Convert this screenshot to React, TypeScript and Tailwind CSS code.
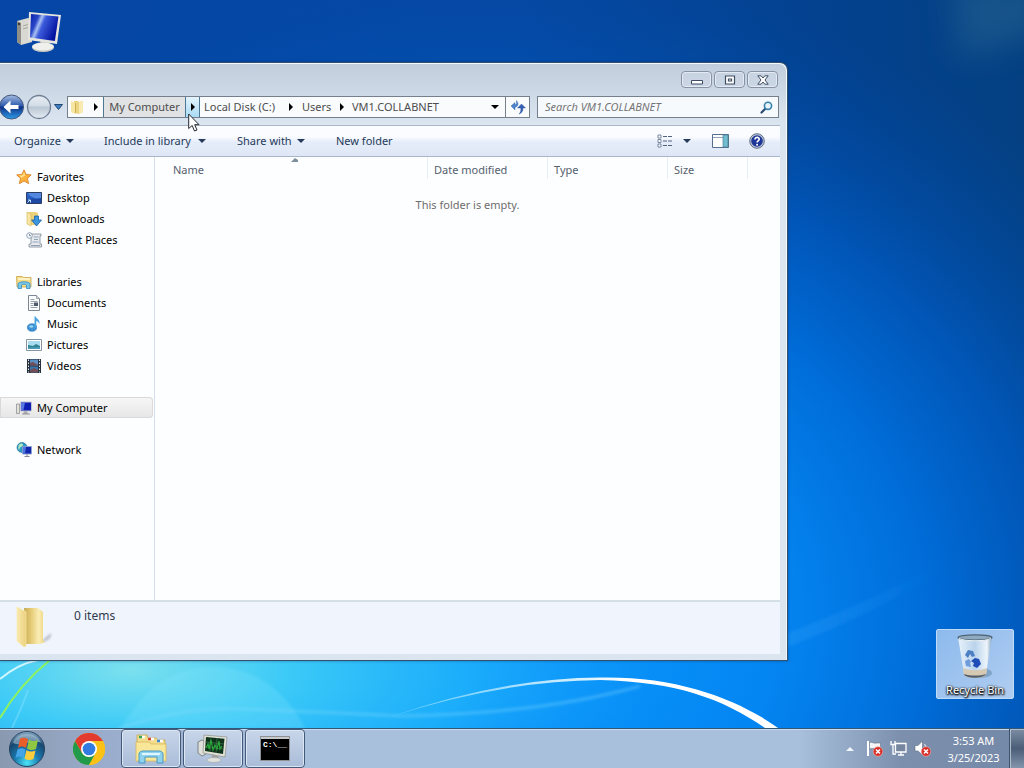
import type { ReactNode } from "react";

type IconProps = { className?: string };

function ComputerIcon({ className }: IconProps) {
  return (
    <svg viewBox="0 0 46 42" className={className} aria-hidden="true">
      <defs>
        <linearGradient id="pc-screen" x1="0" y1="0" x2="1" y2="0.4">
          <stop offset="0" stopColor="#0a1fa8" />
          <stop offset="0.28" stopColor="#2846c8" />
          <stop offset="0.4" stopColor="#a9c0f2" />
          <stop offset="0.52" stopColor="#3c5cdc" />
          <stop offset="1" stopColor="#0414a0" />
        </linearGradient>
      </defs>
      <path d="M1 10l11-3 4 2v22l-11 3-4-3z" fill="#d9d8d2" />
      <path d="M1 10l4 2v22l-4-3z" fill="#8f8f88" />
      <path d="M7 15l5-1.500M7 18l5-1.500" stroke="#a5a59d" strokeWidth="1" />
      <circle cx="3" cy="13" r="1.200" fill="#3a3a38" />
      <path d="M24 29l9 1 1 6h-9z" fill="#b9b9b3" />
      <ellipse cx="27" cy="36.500" rx="11" ry="4.500" fill="#c9c9c4" />
      <ellipse cx="27" cy="35.500" rx="11" ry="4" fill="#efefec" />
      <path d="M13 1l32 3-4 29-29-4z" fill="#e6e5df" />
      <path d="M15 3l27.500 2.600-3.600 24.400L14 26.500z" fill="url(#pc-screen)" />
    </svg>
  );
}

function RecycleIcon({ className }: IconProps) {
  return (
    <svg viewBox="0 0 38 48" className={className} aria-hidden="true">
      <defs>
        <linearGradient id="bin" x1="0" x2="1">
          <stop offset="0" stopColor="#e8f2fb" />
          <stop offset="0.5" stopColor="#b9d3ec" />
          <stop offset="0.85" stopColor="#eef5fb" />
          <stop offset="1" stopColor="#86a3bf" />
        </linearGradient>
      </defs>
      <ellipse cx="24" cy="40" rx="12" ry="5" fill="#5e7f9f" opacity="0.500" />
      <path d="M2 4l6 37c1 4 20 4 22 0l6-37z" fill="url(#bin)" />
      <path d="M7 35l1 7c1 4 20 4 22 0l1-7c-7 3-17 3-24 0z" fill="#d6c9b4" />
      <path d="M8 41c1 5 20 5 22 0-6 2-16 2-22 0z" fill="#53606c" />
      <ellipse cx="19" cy="4.500" rx="17" ry="2.700" fill="#8fa9be" stroke="#4f6577" strokeWidth="1.200" />
      <path d="M3 5.500c5 3 27 3 32 0" stroke="#f1f7fb" strokeWidth="1" fill="none" />
      <path d="M9 22l3-5 5 1 2 5-3 1-2-3-2 4z" fill="#4c7fc4" />
      <path d="M19 25l4 1 2 5-4 4-4-2 1-3-3-2z" fill="#1f4db8" />
      <path d="M9 28l4-2 2 3-1 1 1 4-5-1z" fill="#6f9bdb" />
    </svg>
  );
}

function FolderIcon({ className }: IconProps) {
  return (
    <svg viewBox="0 0 38 42" className={className} aria-hidden="true">
      <defs>
        <linearGradient id="fold-a" x1="0" x2="1">
          <stop offset="0" stopColor="#f9eab0" />
          <stop offset="1" stopColor="#ecd07c" />
        </linearGradient>
        <linearGradient id="fold-b" x1="0" x2="1">
          <stop offset="0" stopColor="#c9ab57" />
          <stop offset="0.35" stopColor="#e6cc78" />
          <stop offset="0.7" stopColor="#faedb4" />
          <stop offset="1" stopColor="#ecd27e" />
        </linearGradient>
        <filter id="fold-blur">
          <feGaussianBlur stdDeviation="1.200" />
        </filter>
      </defs>
      <path d="M24 36l11-9c1 4-2 8-9 9z" fill="#a9aeb9" opacity="0.700" filter="url(#fold-blur)" />
      <path d="M8 2l14 0 5 4v28l2 2-5 2-14 0z" fill="url(#fold-b)" />
      <path d="M1 1l9 5v34l-2 1-7-6z" fill="url(#fold-a)" stroke="#f7e9a9" strokeWidth="0.700" />
    </svg>
  );
}

function AddressFolderIcon() {
  return (
    <svg viewBox="0 0 15 16" className="h-4 w-[15px]" aria-hidden="true">
      <path d="M4 2h4l1 1 4-1v11l-4 2-5-1z" fill="#ecd583" />
      <path d="M9 3l4-1v11l-4 2z" fill="#f9ebb0" />
      <path d="M1 2l4 2v11l-4-2z" fill="#f7e6a1" />
      <path d="M5.500 4v10" stroke="#cfae52" />
    </svg>
  );
}

function StarIcon() {
  return (
    <svg viewBox="0 0 16 16" className="size-4" aria-hidden="true">
      <path d="M8 .8l2.100 4.600 5.100.5-3.800 3.500 1.200 5.200L8 12l-4.700 2.700 1.200-5.200L.7 5.900l5.200-.5z" fill="#fbb13b" stroke="#d9822b" strokeWidth="0.900" />
      <path d="M8 3l1.300 3.200L5.500 9 3 6.600l3.500-.4z" fill="#fde08a" />
    </svg>
  );
}

function DesktopIcon() {
  return (
    <svg viewBox="0 0 16 16" className="size-4" aria-hidden="true">
      <path d="M.5 2.500h15v11H.5z" fill="#2a5fc4" stroke="#2a3f63" />
      <path d="M2 3h13v5C9 9 4 7 2 3z" fill="#5488e0" />
      <path d="M1 9c5-1 9 1 14-1v5H1z" fill="#1d48a4" />
      <path d="M1.500 12.500L4 10M2 10h2.500v2.500" stroke="#c4e4ff" fill="none" />
    </svg>
  );
}

function DownloadsIcon() {
  return (
    <svg viewBox="0 0 16 16" className="size-4" aria-hidden="true">
      <path d="M3 1h7l2 1v12H4z" fill="#edd27a" />
      <path d="M1 1l4 2v12l-4-2z" fill="#f7e6a1" stroke="#d3b152" strokeWidth="0.600" />
      <path d="M8.500 5h4v4h3L10.500 15 5.500 9h3z" fill="#3a97df" stroke="#1661a8" strokeWidth="0.800" />
    </svg>
  );
}

function RecentIcon() {
  return (
    <svg viewBox="0 0 16 16" className="size-4" aria-hidden="true">
      <path d="M5 2h10v2h-1v8h1.500v3H3v-3h2z" fill="#e6eaee" stroke="#8b959f" strokeWidth="0.900" />
      <path d="M7.500 5h5M8 7.500h4M6.500 10h6M5 13.500h9" stroke="#8fa3b5" />
      <circle cx="3.500" cy="3.500" r="2.800" fill="#f6fafc" stroke="#8499ab" strokeWidth="0.900" />
      <path d="M3.500 2v1.700H5" stroke="#53687c" fill="none" strokeWidth="0.700" />
    </svg>
  );
}

function LibrariesIcon() {
  return (
    <svg viewBox="0 0 16 16" className="size-4" aria-hidden="true">
      <path d="M.5 2.500h6l1 1h7.500V13H1z" fill="#f4dc86" stroke="#c9a546" strokeWidth="0.800" />
      <path d="M2 5h12" stroke="#fff8d8" strokeWidth="1.500" />
      <path d="M2 14.500V10c0-3 12-3 12 0v4.500h-3.500V11c0-1-5-1-5 0v3.500z" fill="#76c7ea" stroke="#348cbf" strokeWidth="0.800" />
    </svg>
  );
}

function DocumentIcon() {
  return (
    <svg viewBox="0 0 16 16" className="size-4" aria-hidden="true">
      <path d="M2.500.5h8l3 3v12h-11z" fill="#fbfcfd" stroke="#7d8791" />
      <path d="M10.500.5v3h3" fill="#d5dbe2" stroke="#7d8791" strokeWidth="0.700" />
      <path d="M4.500 4.500h4M4.500 6.500h7M4.500 8.500h3M4.500 10.500h3M4.500 12.500h7" stroke="#8d98a5" strokeWidth="0.900" />
      <path d="M8 7.500h4v3.500H8z" fill="#4e5b6d" />
    </svg>
  );
}

function MusicIcon() {
  return (
    <svg viewBox="0 0 16 16" className="size-4" aria-hidden="true">
      <ellipse cx="6" cy="11.500" rx="4.500" ry="3.700" fill="#3b94d8" stroke="#2471b4" strokeWidth="0.700" />
      <ellipse cx="5.300" cy="10.500" rx="2" ry="1.300" fill="#9bd3f6" />
      <path d="M8.500 11V.5h1.300c.4 2.700 4.700 3 3.500 7.500-.6-2-2-2.700-3-3V12z" fill="#4aa4e0" />
    </svg>
  );
}

function PictureIcon() {
  return (
    <svg viewBox="0 0 16 16" className="size-4" aria-hidden="true">
      <path d="M.5 2.500h15v11H.5z" fill="#fff" stroke="#8795a3" />
      <path d="M2 4h12v8H2z" fill="#a9dcee" />
      <path d="M2 8l5 1 3-2 4 2v3H2z" fill="#2f8391" />
      <path d="M2 10.500l12-.5v2H2z" fill="#4c9cb8" />
    </svg>
  );
}

function VideoIcon() {
  return (
    <svg viewBox="0 0 16 16" className="size-4" aria-hidden="true">
      <path d="M1 1h14v14H1z" fill="#26313d" />
      <path d="M4 1.500h8v6H4z" fill="#5a8fc4" />
      <path d="M4 8.500h8v6H4z" fill="#3b76ae" />
      <path d="M4 5l3-1 5 3v.5H4zM4 12l4-2 4 2v2.500H4z" fill="#714d55" />
      <path d="M2.500 1.500v13M13.500 1.500v13" stroke="#e5edf4" strokeDasharray="1.500 1.500" />
    </svg>
  );
}

function SmallComputerIcon() {
  return (
    <svg viewBox="0 0 16 16" className="size-4" aria-hidden="true">
      <path d="M.5 4h3v9.500h-3z" fill="#e1e1de" stroke="#85858a" strokeWidth="0.700" />
      <path d="M8 11h3l1 3H7z" fill="#a9a9ad" />
      <path d="M6 14h8" stroke="#96969c" />
      <path d="M4.500 2h11v9h-11z" fill="#0c1fb0" stroke="#c2c4d3" />
      <path d="M5 2.500h4L7.500 10H5z" fill="#5a78e4" />
    </svg>
  );
}

function NetworkIcon() {
  return (
    <svg viewBox="0 0 16 16" className="size-4" aria-hidden="true">
      <circle cx="6" cy="5.500" r="5" fill="#2b9bc4" stroke="#1a6690" strokeWidth="0.600" />
      <path d="M3 2.500c2-1.500 4-1 4 .5S4 4.500 3.500 7 1.500 6 3 2.500z" fill="#aee6c0" />
      <path d="M6.500 4.500h9V12h-9z" fill="#1128ad" stroke="#8ea0d4" strokeWidth="0.900" />
      <path d="M7 5h3l-1 6.500H7z" fill="#4d73e0" />
      <path d="M11 12v2M8.500 14.500h5" stroke="#83899b" />
    </svg>
  );
}

function Caret({ className = "" }: IconProps) {
  return (
    <svg viewBox="0 0 8 4" className={`h-1 w-2 shrink-0 ${className}`} aria-hidden="true">
      <path d="M0 0h8L4 4z" fill="currentColor" />
    </svg>
  );
}

function CrumbArrow() {
  return (
    <svg viewBox="0 0 4 8" className="h-2 w-1" aria-hidden="true">
      <path d="M0 0l4 4-4 4z" fill="#000" />
    </svg>
  );
}

function ErrorBadge() {
  return (
    <g>
      <circle cx="12" cy="11.500" r="4.800" fill="#d8302a" stroke="#f2b7ae" strokeWidth="0.600" />
      <path d="M10 9.500l4 4M14 9.500l-4 4" stroke="#fff" strokeWidth="1.500" />
    </g>
  );
}

function Wallpaper() {
  return (
    <svg viewBox="0 0 1024 768" preserveAspectRatio="none" className="absolute inset-0 h-full w-full" aria-hidden="true">
      <defs>
        <linearGradient id="sky" x1="0" x2="1" y1="0" y2="0">
          <stop offset="0" stopColor="#0546a6" />
          <stop offset="0.5" stopColor="#0648a4" />
          <stop offset="0.82" stopColor="#03418e" />
          <stop offset="1" stopColor="#044082" />
        </linearGradient>
        <radialGradient id="glow" gradientUnits="userSpaceOnUse" cx="0" cy="0" r="1" gradientTransform="translate(480 620) scale(790 660)">
          <stop offset="0" stopColor="#0c9cff" />
          <stop offset="0.37" stopColor="#0486f2" />
          <stop offset="0.56" stopColor="#0070de" stopOpacity="0.950" />
          <stop offset="0.72" stopColor="#005cc4" stopOpacity="0.800" />
          <stop offset="1" stopColor="#0048a0" stopOpacity="0" />
        </radialGradient>
        <radialGradient id="light" gradientUnits="userSpaceOnUse" cx="0" cy="0" r="1" gradientTransform="translate(130 670) scale(560 210)">
          <stop offset="0" stopColor="#7be0ee" />
          <stop offset="0.28" stopColor="#3ccaf7" />
          <stop offset="0.6" stopColor="#1eb0fb" stopOpacity="0.900" />
          <stop offset="1" stopColor="#0c8ef8" stopOpacity="0" />
        </radialGradient>
        <linearGradient id="arc" x1="0" x2="1">
          <stop offset="0" stopColor="#9fe2ff" stopOpacity="0.500" />
          <stop offset="0.6" stopColor="#fff" />
          <stop offset="1" stopColor="#fff" />
        </linearGradient>
        <linearGradient id="ray" x1="0" x2="1">
          <stop offset="0" stopColor="#2d9cf5" stopOpacity="0.400" />
          <stop offset="0.7" stopColor="#2d9cf5" stopOpacity="0" />
        </linearGradient>
        <filter id="soft" x="-40%" y="-60%" width="180%" height="220%">
          <feGaussianBlur stdDeviation="16" />
        </filter>
        <filter id="edge">
          <feGaussianBlur stdDeviation="1.500" />
        </filter>
      </defs>
      <path d="M0 0h1024v768H0z" fill="url(#sky)" />
      <path d="M0 0h1024v768H0z" fill="url(#glow)" />
      <path d="M0 450h800v318H0z" fill="url(#light)" />
      <path d="M950-20h100v50L960 60z" fill="#3a7898" opacity="0.350" filter="url(#soft)" />
      <path d="M770 640Q880 600 1000 530v6Q880 615 770 653z" fill="url(#ray)" filter="url(#edge)" />
      <path d="M120 728C145 690 170 667 212 667S285 690 305 728z" fill="#8deaff" opacity="0.220" filter="url(#edge)" />
      <path d="M118 729Q180 707 240 709T400 716Q540 714 640 686" stroke="#86dcff" strokeWidth="3" fill="none" opacity="0.350" filter="url(#edge)" />
      <path d="M390 717Q500 678 600 677.500C680 676 740 700 781 730L768 730C725 700 680 682 600 680Q500 681 390 717z" fill="url(#arc)" />
      <path d="M0 679Q18 664 38 660" stroke="#e8fbff" strokeWidth="2" fill="none" opacity="0.850" />
      <path d="M0 718Q20 684 50 660" stroke="#8df25e" strokeWidth="2" fill="none" />
      <path d="M12 728Q23 705 28 690" stroke="#9beaff" strokeWidth="2" fill="none" opacity="0.350" />
    </svg>
  );
}

type NavItem = { label: string; icon: ReactNode };

const groups: { head: NavItem; items: NavItem[]; selected?: boolean }[] = [
  {
    head: { label: "Favorites", icon: <StarIcon /> },
    items: [
      { label: "Desktop", icon: <DesktopIcon /> },
      { label: "Downloads", icon: <DownloadsIcon /> },
      { label: "Recent Places", icon: <RecentIcon /> },
    ],
  },
  {
    head: { label: "Libraries", icon: <LibrariesIcon /> },
    items: [
      { label: "Documents", icon: <DocumentIcon /> },
      { label: "Music", icon: <MusicIcon /> },
      { label: "Pictures", icon: <PictureIcon /> },
      { label: "Videos", icon: <VideoIcon /> },
    ],
  },
  { head: { label: "My Computer", icon: <SmallComputerIcon /> }, items: [], selected: true },
  { head: { label: "Network", icon: <NetworkIcon /> }, items: [] },
];

function CaptionButtons() {
  const button =
    "flex h-[17px] w-[31px] items-center justify-center rounded-sm border border-[#8793a5] bg-[#cbd6e4]/60 text-[#3f4d63] shadow-[inset_0_0_0_1px_#e3eaf3]";
  return (
    <div className="flex h-[33px] shrink-0 justify-end gap-[2px] pt-2 pr-[2px]">
      <button className={button} aria-label="Minimize">
        <svg viewBox="0 0 12 10" className="h-[10px] w-3">
          <path d="M.5 5.500h11v3.500H.5z" fill="#fff" stroke="currentColor" />
        </svg>
      </button>
      <button className={button} aria-label="Maximize">
        <svg viewBox="0 0 12 10" className="h-[10px] w-3">
          <path d="M1.500 1h9v8h-9zM4.500 4h3v2h-3z" fill="#fff" stroke="currentColor" strokeWidth="1.200" />
        </svg>
      </button>
      <button className={button} aria-label="Close">
        <svg viewBox="0 0 12 10" className="h-[10px] w-3">
          <path d="M.8.800h3.300L6 3 7.900.8h3.300L8 5l3.200 4.200H7.900L6 7 4.100 9.200H.8L4 5z" fill="#fff" stroke="currentColor" />
        </svg>
      </button>
    </div>
  );
}

function AddressRow() {
  return (
    <div className="flex h-[22px] shrink-0 items-center pr-px">
      <div className="flex w-[67px] shrink-0 items-center">
        <button aria-label="Back" className="w-6">
          <svg viewBox="0 0 24 26" className="h-[26px] w-6">
            <defs>
              <linearGradient id="back" x1="0" x2="0" y1="0" y2="1">
                <stop offset="0" stopColor="#a5bce0" />
                <stop offset="0.450" stopColor="#2f5cae" />
                <stop offset="0.500" stopColor="#0e2f86" />
                <stop offset="1" stopColor="#2f9fea" />
              </linearGradient>
            </defs>
            <circle cx="11.500" cy="13" r="12" fill="url(#back)" stroke="#45587c" />
            <path d="M3.500 13l7-6.500v4.500h8v4h-8v4.500z" fill="#fff" />
          </svg>
        </button>
        <button aria-label="Forward" className="ml-[2px] w-[26px]">
          <svg viewBox="0 0 26 26" className="size-[26px]">
            <defs>
              <linearGradient id="forward" x1="0" x2="0" y1="0" y2="1">
                <stop offset="0" stopColor="#e7edf4" />
                <stop offset="0.450" stopColor="#d3dce6" />
                <stop offset="0.500" stopColor="#b9c5d2" />
                <stop offset="1" stopColor="#e4ecf4" />
              </linearGradient>
            </defs>
            <circle cx="13" cy="13" r="11.500" fill="url(#forward)" stroke="#718095" strokeWidth="1.300" />
          </svg>
        </button>
        <button aria-label="Recent pages" className="ml-[2px] w-[9px]">
          <svg viewBox="0 0 9 6" className="h-[6px] w-[9px]">
            <path d="M.5.5h8L4.500 5.500z" fill="#3d7fc6" stroke="#24466f" />
          </svg>
        </button>
      </div>
      <nav aria-label="Address" className="flex h-[22px] min-w-0 flex-1 items-stretch border border-[#76808d] bg-[#f9fbfd] text-[#4d4d4d]">
        <div className="flex w-[35px] shrink-0 items-center justify-between pr-[5px] pl-[2px]">
          <AddressFolderIcon />
          <CrumbArrow />
        </div>
        <button className="w-[83px] shrink-0 border-x border-[#4c7893] bg-[#e1e2e4] whitespace-nowrap">My Computer</button>
        <button aria-label="My Computer folders" className="flex w-[14px] shrink-0 items-center justify-center border-r border-[#4c7893] bg-linear-to-b from-[#e4f4fc] to-[#a8dbf4]">
          <CrumbArrow />
        </button>
        <button className="flex w-[98px] shrink-0 items-center justify-between pr-[5px] pl-1 whitespace-nowrap">
          Local Disk (C:)
          <CrumbArrow />
        </button>
        <button className="flex w-[50px] shrink-0 items-center justify-between pr-1 pl-1">
          Users
          <CrumbArrow />
        </button>
        <button className="pl-1">VM1.COLLABNET</button>
        <button aria-label="Previous locations" className="ml-auto flex w-5 items-center justify-center text-black">
          <Caret />
        </button>
        <button aria-label="Refresh" className="flex w-6 shrink-0 items-center justify-center border-l border-[#76808d]">
          <svg viewBox="0 0 16 16" className="size-4">
            <path d="M1 7l4-3.500V6c1.500-.3 1.800-2 1.500-4.500C8.500 4 9 7 5 8.500V11z" fill="#4c82cf" stroke="#315f9f" strokeWidth="0.400" />
            <path d="M7.500 9L11.500 5l4 4h-2.500c.2 3-1.500 5.500-4 6 1.700-1.500 2-3.500 1.800-6z" fill="#3560b4" stroke="#2c4f94" strokeWidth="0.400" />
          </svg>
        </button>
      </nav>
      <form className="ml-[7px] flex h-[22px] w-[242px] shrink-0 items-center border border-[#76808d] bg-[#f7fafd] pr-[5px] pl-[7px]">
        <input
          type="search"
          aria-label="Search VM1.COLLABNET"
          placeholder="Search VM1.COLLABNET"
          className="min-w-0 flex-1 italic outline-none placeholder:text-[#757575]"
        />
        <button type="button" aria-label="Search">
          <svg viewBox="0 0 13 13" className="size-[13px]">
            <path d="M1.500 11.500L5.500 7.500" stroke="#294a70" strokeWidth="2.200" strokeLinecap="round" />
            <circle cx="8" cy="4.800" r="3.600" fill="#e7f5fb" stroke="#3480ad" strokeWidth="1.600" />
          </svg>
        </button>
      </form>
    </div>
  );
}

function Toolbar() {
  return (
    <div className="mt-[7px] flex h-8 shrink-0 items-center border-y border-t-[#aab7c6] border-b-[#a9b5c8] bg-linear-to-b from-[#fafcff] from-35% via-[#e5ecf9] via-55% to-[#dfe7f6] pr-[15px] pl-[14px] text-[#263a5a]">
      <button className="flex w-[60px] items-center justify-between">
        Organize
        <Caret />
      </button>
      <button className="ml-[30px] flex w-[102px] items-center justify-between whitespace-nowrap">
        Include in library
        <Caret />
      </button>
      <button className="ml-[31px] flex w-[68px] items-center justify-between whitespace-nowrap">
        Share with
        <Caret />
      </button>
      <button className="ml-[31px] whitespace-nowrap">New folder</button>
      <div className="ml-auto flex items-center">
        <button aria-label="Change your view" className="flex items-center gap-[10px]">
          <svg viewBox="0 0 16 14" className="h-[14px] w-4">
            <path d="M1 1h3v3H1zM1 5.500h3v3H1zM1 10h3v3H1z" fill="#fff" stroke="#6c7c96" strokeWidth="0.900" />
            <path d="M6 2.500h9M6 7h9M6 11.500h9" stroke="#52637e" strokeDasharray="4 1" />
          </svg>
          <Caret />
        </button>
        <button aria-label="Show the preview pane" className="ml-[21px]">
          <svg viewBox="0 0 17 14" className="h-[14px] w-[17px]">
            <path d="M.5.5h16v13H.5z" fill="#fff" stroke="#54708c" />
            <path d="M1 3.500h10" stroke="#8fa6bc" />
            <path d="M11 1h5v12h-5z" fill="#70bdd0" stroke="#4e7f9b" strokeWidth="0.700" />
          </svg>
        </button>
        <button aria-label="Get help" className="ml-5">
          <svg viewBox="0 0 16 16" className="size-4">
            <circle cx="8" cy="8" r="7.300" fill="#bac5d5" stroke="#58657c" strokeWidth="0.900" />
            <circle cx="8" cy="8" r="5.800" fill="#1e3698" />
            <path d="M6 6.500C6 3.500 10.300 3.800 10.200 6.300 10 8 8.100 7.800 8.100 9.500" stroke="#fff" strokeWidth="1.600" fill="none" />
            <circle cx="8.100" cy="11.700" r="1" fill="#fff" />
          </svg>
        </button>
      </div>
    </div>
  );
}

function NavigationPane() {
  return (
    <nav aria-label="Folders" className="flex w-[155px] shrink-0 flex-col gap-[21px] border-r border-[#d5dfec] pt-[9px] text-black">
      {groups.map(({ head, items, selected }) => (
        <ul key={head.label}>
          <li>
            <a
              href="#"
              className={`mr-px flex h-[21px] items-center gap-[5px] pl-4 ${selected ? "rounded-r-sm bg-linear-to-b from-[#f7f7f7] to-[#e6e6e7] shadow-[inset_0_0_0_1px_#d9d9d9]" : ""}`}
            >
              {head.icon}
              {head.label}
            </a>
          </li>
          {items.map((item) => (
            <li key={item.label}>
              <a href="#" className="flex h-[21px] items-center gap-[5px] pl-[26px]">
                {item.icon}
                {item.label}
              </a>
            </li>
          ))}
        </ul>
      ))}
    </nav>
  );
}

function FileList() {
  const head = "h-[22px] border-r border-[#e6edf4] pl-[6px] pt-1 text-left font-normal text-[#56606d]";
  return (
    <div className="min-w-0 flex-1">
      <table className="w-full table-fixed border-separate border-spacing-0">
        <colgroup>
          <col />
          <col className="w-[120px]" />
          <col className="w-[120px]" />
          <col className="w-[80px]" />
          <col className="w-8" />
        </colgroup>
        <thead>
          <tr>
            <th className="relative h-[22px] border-r border-[#e6edf4] pt-1 pl-[18px] text-left font-normal text-[#56606d]">
              Name
              <svg viewBox="0 0 7 4" className="absolute top-[1px] left-1/2 h-1 w-[7px]" aria-hidden="true">
                <path d="M0 4L4 0l3 2v2z" fill="#7d8f9c" />
              </svg>
            </th>
            <th className={head}>Date modified</th>
            <th className={head}>Type</th>
            <th className={head}>Size</th>
            <td />
          </tr>
        </thead>
        <tbody>
          <tr>
            <td colSpan={5} className="pt-[18px] text-center text-[#6d6d6d]">
              This folder is empty.
            </td>
          </tr>
        </tbody>
      </table>
    </div>
  );
}

function ExplorerWindow() {
  return (
    <main className="absolute top-[62px] right-[236px] bottom-[107px] left-0 flex flex-col rounded-tr-lg border-t border-r border-b border-[#34506f] bg-linear-to-b from-[#c0cddc] to-[#dbe5f0] to-[60px] pr-[7px] pb-[6px] shadow-[inset_-1px_1px_0_#f3f8fc,0_0_3px_rgba(0,25,70,0.4)]">
      <CaptionButtons />
      <AddressRow />
      <Toolbar />
      <div className="flex min-h-0 flex-1 bg-[#fdfeff]">
        <NavigationPane />
        <FileList />
      </div>
      <footer className="flex h-[54px] shrink-0 items-start border-t-2 border-[#d5dfe8] bg-[#f0f4fd] pt-1 pl-4 text-[#303a4c]">
        <FolderIcon className="h-[42px] w-[38px]" />
        <p className="ml-5 text-[12px] leading-5">0 items</p>
      </footer>
    </main>
  );
}

function Taskbar() {
  const task =
    "flex h-[39px] w-[60px] items-center justify-center rounded-sm border border-[#45597a] bg-linear-to-b from-[#c8d6e9] to-[#a9bcd8] shadow-[inset_0_0_0_1px_#dce7f5]";
  return (
    <footer className="absolute inset-x-0 bottom-0 flex h-10 items-center border-t border-[#335777] bg-linear-[to_right,#8999b0,#9aaccb_10%,#a8c0dc_30%,#a8c0dc_78%,#7c90ae_88%,#7488a7] shadow-[inset_0_1px_0_#c9dbed]">
      <button aria-label="Start" className="ml-2">
        <svg viewBox="0 0 38 38" className="size-[38px]">
          <defs>
            <radialGradient id="orb" cx="0.500" cy="0.900" r="0.900">
              <stop offset="0" stopColor="#4be4f7" />
              <stop offset="0.400" stopColor="#1a78ae" />
              <stop offset="0.750" stopColor="#17486f" />
              <stop offset="1" stopColor="#8fb2cc" />
            </radialGradient>
          </defs>
          <circle cx="19" cy="19" r="17.500" fill="url(#orb)" stroke="#27435f" />
          <path d="M5 13C9 1 29 1 33 13 25 9 14 17 5 13z" fill="#d7e6f1" opacity="0.450" />
          <path d="M12 9c3-2 5-1 8 0l-2 9c-3-2-5-2-8 0z" fill="#e95d2a" />
          <path d="M21 9.500c3 2 6 2 9 .5l-2 9c-3 1.500-6 1.500-9-.5z" fill="#8fc642" />
          <path d="M9.500 19.500c3-2 5-1.500 8 0l-2 8.500c-3-2-5-2-8 0z" fill="#43a4e8" />
          <path d="M18.500 20c3 2 6 2 9 .5l-2 8.500c-3 1.500-6 1.500-9-.5z" fill="#fbcc3c" />
        </svg>
      </button>
      <button aria-label="Google Chrome" className="ml-[27px]">
        <svg viewBox="0 0 32 32" className="size-8">
          <circle cx="16" cy="16" r="16" fill="#fbc116" />
          <path d="M2.140 8A16 16 0 0 0 16 32l6.930-12-6.930 4-6.930-4z" fill="#229a4b" />
          <path d="M16 8h13.860A16 16 0 0 1 16 32l6.930-12z" fill="#fbc116" />
          <path d="M16 8h13.860A16 16 0 0 0 2.140 8l6.930 12z" fill="#e33b2e" />
          <circle cx="16" cy="16" r="8" fill="#fff" />
          <circle cx="16" cy="16" r="6.300" fill="#327be0" />
        </svg>
      </button>
      <button className={`ml-4 ${task}`} aria-label="Windows Explorer">
        <svg viewBox="0 0 34 30" className="h-[30px] w-[34px]">
          <path d="M3 1h10l1 3h8l2 2h7v20H3z" fill="#f3dd8c" stroke="#c5a552" strokeWidth="0.800" />
          <path d="M5 3h6M14 5h6M23 7h6" stroke="#fff" strokeWidth="2.500" />
          <path d="M5 3h3" stroke="#32a356" strokeWidth="2.500" />
          <path d="M14 5h3" stroke="#d5422f" strokeWidth="2.500" />
          <path d="M23 7h3" stroke="#3c89d2" strokeWidth="2.500" />
          <path d="M2 8h13l2 2h15v17H2z" fill="#f9e799" stroke="#d8b75b" strokeWidth="0.800" />
          <path d="M5 29V20c0-2 2-3 4-3h16c2 0 4 1 4 3v9h-6v-6H11v6z" fill="#8fd2ee" stroke="#4797c5" />
          <path d="M8 20h18" stroke="#dff6ff" strokeWidth="2" />
        </svg>
      </button>
      <button className={`ml-[2px] ${task}`} aria-label="Resource Monitor">
        <svg viewBox="0 0 34 30" className="h-[30px] w-[34px]">
          <path d="M2 8l4-2 4 2v12l-4 2-4-3z" fill="#dedfda" stroke="#68706f" strokeWidth="0.800" />
          <path d="M16 21l6 1 1 3h-7z" fill="#a0a39f" />
          <ellipse cx="18" cy="26" rx="7" ry="2.500" fill="#dfe1dd" stroke="#989d9b" strokeWidth="0.500" />
          <path d="M8 1l23 2-2 20-22-4z" fill="#e2e2d8" stroke="#898e86" strokeWidth="0.700" />
          <path d="M10 3l18.500 1.800L27 20 9 17z" fill="#10321a" />
          <path d="M9.500 8l18.500 2M9.300 13l18 2M15 3.500l-1 14M21 4l-1 15" stroke="#3f7850" strokeWidth="0.700" />
          <path d="M10 14l2-4 1 5 2-9 2 10 2-5 2 4 2-8 1 8 2-3" stroke="#2aa83c" strokeWidth="1.200" fill="none" />
        </svg>
      </button>
      <button className={`ml-[2px] ${task}`} aria-label="Command Prompt">
        <span className="flex h-[25px] w-[30px] flex-col border border-[#8f9092] bg-black text-left">
          <span className="h-[2px] w-full bg-[#c7cacc]" />
          <span className="pl-[2px] font-['Liberation_Mono',monospace] text-[8px] leading-[12px] font-bold text-white">C:\__</span>
        </span>
      </button>
      <div className="ml-auto flex h-full items-center">
        <button aria-label="Show hidden icons" className="mr-3 text-[#f3f7fb]">
          <Caret className="rotate-180" />
        </button>
        <button aria-label="Action Center" className="mr-[7px]">
          <svg viewBox="0 0 17 17" className="size-[17px]">
            <path d="M2 1v15" stroke="#fff" strokeWidth="2" />
            <path d="M3.500 2.500c3-1 4 1.500 7 .500h4v6c-4 1-6-1.500-11 0z" fill="#f3f5f7" stroke="#56647b" strokeWidth="0.500" />
            <ErrorBadge />
          </svg>
        </button>
        <button aria-label="Network" className="mr-[7px]">
          <svg viewBox="0 0 17 17" className="size-[17px]">
            <path d="M5.500 3.500H16v8.500H5.500z" fill="#76869e" stroke="#fff" strokeWidth="1.300" />
            <path d="M8 15h6M11 12v3M1 1v3.500h4V1M3 4.500V14h3" stroke="#fff" strokeWidth="1.300" fill="none" />
          </svg>
        </button>
        <button aria-label="Speakers" className="mr-4">
          <svg viewBox="0 0 17 17" className="size-[17px]">
            <path d="M1 5.500h3L8.500 1v14L4 11H1z" fill="#fff" stroke="#5e6c83" strokeWidth="0.600" />
            <path d="M10.500 4c1 1 1 3 1 5" stroke="#edf3f9" fill="none" />
            <ErrorBadge />
          </svg>
        </button>
        <button className="w-[53px] text-center leading-[17px] whitespace-nowrap text-white">
          <time dateTime="2023-03-25T03:53">
            3:53 AM
            <br />
            3/25/2023
          </time>
        </button>
        <button aria-label="Show desktop" className="ml-[9px] h-full w-[15px] border-l border-[#3f526e] bg-linear-to-b from-[#7d8da5] via-[#4c5d77] to-[#8495ad] shadow-[inset_1px_1px_0_#aebdcc]" />
      </div>
    </footer>
  );
}

export default function App() {
  return (
    <div className="relative h-screen cursor-default overflow-hidden bg-[#0648a4] font-['Noto_Sans',sans-serif] text-[11px] leading-4">
      <Wallpaper />
      <button aria-label="My Computer" className="absolute top-[11px] left-4">
        <ComputerIcon className="h-[42px] w-[46px]" />
      </button>
      <button className="absolute right-[10px] bottom-[69px] flex h-[70px] w-[78px] flex-col items-center rounded-xs border border-[#c0dbf6] bg-linear-to-br from-[#8dbaed] to-[#b0cdf0] pt-[2px] text-white">
        <RecycleIcon className="h-[50px] w-[38px]" />
        <span className="whitespace-nowrap [text-shadow:0_1px_2px_#000,1px_1px_2px_#000,0_0_2px_#000]">Recycle Bin</span>
      </button>
      <ExplorerWindow />
      <Taskbar />
      <svg viewBox="0 0 12 19" className="pointer-events-none absolute top-[113px] left-[188px] h-[19px] w-3" aria-hidden="true">
        <path d="M.7 1v14.500l3.500-3 2.300 5.500 2.500-1-2.300-5.300H11z" fill="#fff" stroke="#24282e" />
      </svg>
    </div>
  );
}
